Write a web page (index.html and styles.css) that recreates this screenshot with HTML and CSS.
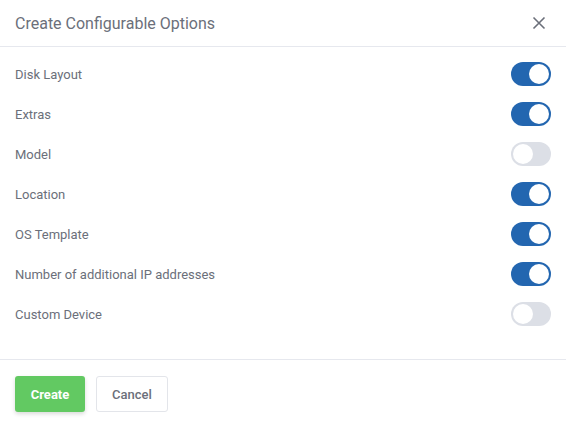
FILE: index.html
```html
<!DOCTYPE html>
<html>
	<head>
		<meta charset="utf-8">
		<title>Create Configurable Options</title>
		<meta name="viewport" content="width=device-width, initial-scale=1.0">
		<link rel="stylesheet" href="styles.css">
	</head>
	<body>
    <div class="modal">
        <div class="modal-header">
            <h3>Create Configurable Options</h3>
            <button class="close" type="button" aria-label="Close">
                <svg width="14" height="14" viewBox="0 0 14 14"><path d="M1.5 1.5l11 11M12.5 1.5l-11 11" stroke="#6b6f7a" stroke-width="1.6" fill="none"/></svg>
            </button>
        </div>

        <div class="modal-body">
            <label class="option-row">
                <span>Disk Layout</span>
                <input type="checkbox" class="switch" checked>
            </label>
            <label class="option-row">
                <span>Extras</span>
                <input type="checkbox" class="switch" checked>
            </label>
            <label class="option-row">
                <span>Model</span>
                <input type="checkbox" class="switch">
            </label>
            <label class="option-row">
                <span>Location</span>
                <input type="checkbox" class="switch" checked>
            </label>
            <label class="option-row">
                <span>OS Template</span>
                <input type="checkbox" class="switch" checked>
            </label>
            <label class="option-row">
                <span>Number of additional IP addresses</span>
                <input type="checkbox" class="switch" checked>
            </label>
            <label class="option-row">
                <span>Custom Device</span>
                <input type="checkbox" class="switch">
            </label>
        </div>

        <div class="modal-footer">
            <button type="button" class="btn btn-create">Create</button>
            <button type="button" class="btn btn-cancel">Cancel</button>
        </div>
    </div>
</body>
</html>
```

FILE: styles.css
```css
html, body { font-family: Roboto, "Liberation Sans", sans-serif; font-size: 13px; }
body { background:#fff; margin:0; color:#6b6f7a; }

.modal { width:566px; }

.modal-header {
	display:flex;
	align-items:center;
	justify-content:space-between;
	height:47px;
	padding:0 20px 0 15px;
	box-sizing:border-box;
	border-bottom:1px solid #e6e8ee;
}
.modal-header h3 { margin:0; font-size:16px; font-weight:400; color:#6b6f7a; }
.close { border:none; background:none; padding:0; cursor:pointer; display:flex; }

.modal-body { padding:7px 15px 25px 15px; }

.option-row {
	display:flex;
	align-items:center;
	justify-content:space-between;
	height:40px;
	cursor:pointer;
}

.switch {
	appearance:none;
	-webkit-appearance:none;
	margin:0;
	width:40px;
	height:24px;
	border-radius:12px;
	background:#dcdfe6;
	position:relative;
	cursor:pointer;
}
.switch::after {
	content:"";
	position:absolute;
	top:2px;
	left:2px;
	width:20px;
	height:20px;
	border-radius:50%;
	background:#fff;
	box-sizing:border-box;
}
.switch:checked { background:#2366b0; }
.switch:checked::after { left:18px; }

.modal-footer {
	display:flex;
	gap:11px;
	padding:16px 15px;
	border-top:1px solid #e6e8ee;
}

.btn {
	height:36px;
	border-radius:3px;
	font-family:Roboto, "Liberation Sans", sans-serif;
	font-size:13px;
	cursor:pointer;
}
.btn-create {
	width:70px;
	background:#62c962;
	color:#fff;
	font-weight:700;
	border:none;
	box-shadow:0 2px 4px rgba(0,0,0,.15);
}
.btn-cancel {
	width:72px;
	background:#fff;
	color:#6b6f7a;
	font-weight:500;
	border:1px solid #e3e5ea;
}
```
